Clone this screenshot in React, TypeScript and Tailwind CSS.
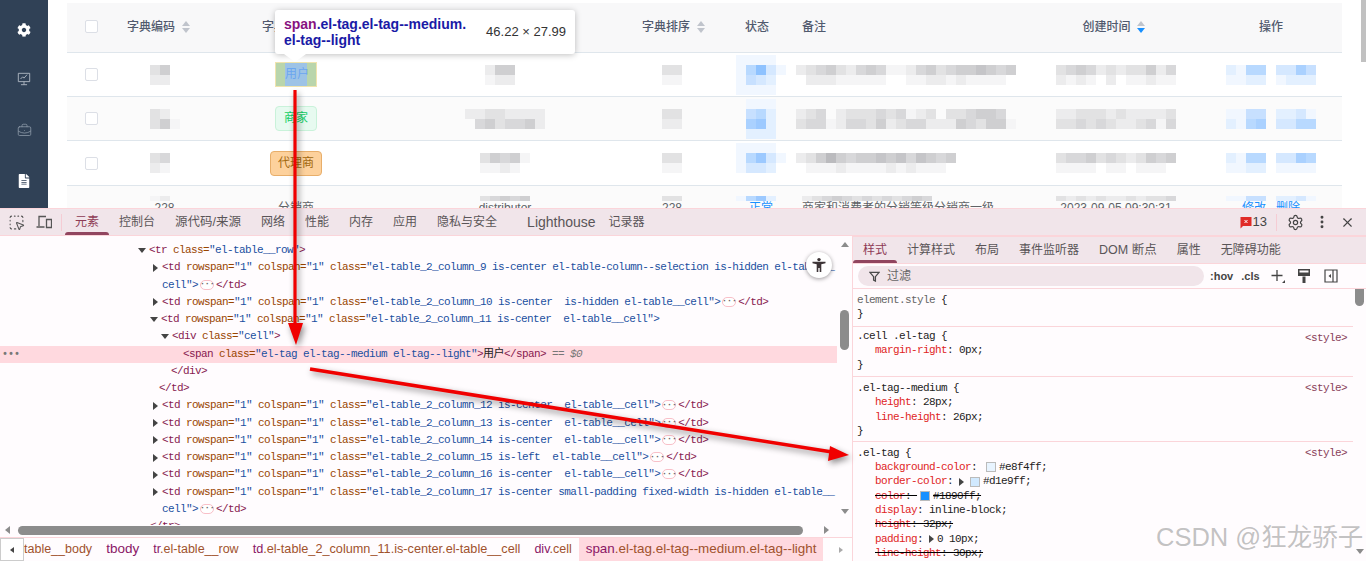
import { ReactNode } from 'react';
import { FaCog, FaFileAlt } from 'react-icons/fa';
import { BriefcaseBusiness, EllipsisVertical, Settings, SquareDashedMousePointer, X } from 'lucide-react';

const MONO = "font-['Liberation_Mono','Noto_Sans_CJK_SC',monospace] text-[11px] tracking-[-0.6px]";

// blurred patch of the original picture: each digit is one 10x10 block
function Mosaic({ rows, blue }: { rows: string[]; blue?: boolean }) {
  const base = blue ? [128, 186, 255] : [168, 168, 172];
  const tone = (d: string) => {
    const a = Number(d) / 9;
    return `rgb(${base.map((c) => Math.round(255 - (255 - c) * a)).join(',')})`;
  };
  return (
    <div className="flex flex-col shrink-0">
      {rows.map((r, i) => (
        <div key={i} className="flex h-[10px]">
          {r.split('').map((d, j) => (
            <div key={j} className="w-[10px] h-[10px]" style={{ backgroundColor: d === '0' ? 'transparent' : tone(d) }} />
          ))}
        </div>
      ))}
    </div>
  );
}

function SortCaret({ active }: { active?: boolean }) {
  return (
    <span className="flex flex-col gap-[2px] ml-[6px] w-[9px] items-center">
      <span className="w-0 h-0 border-x-[4px] border-x-transparent border-b-[5px] border-b-[#c0c4cc]" />
      <span className={`w-0 h-0 border-x-[4px] border-x-transparent border-t-[5px] ${active ? 'border-t-[#1890ff]' : 'border-t-[#c0c4cc]'}`} />
    </span>
  );
}

const COLS = 'grid grid-cols-[48px_99px_164px_254px_80px_84px_224px_180px_142px]';

function Check() {
  return (
    <div className="flex justify-center items-center">
      <span className="w-[13px] h-[13px] rounded-[2px] border border-[#dcdfe6] bg-white" />
    </div>
  );
}

function Row({ bg, h, cells }: { bg: string; h: string; cells: ReactNode[] }) {
  return (
    <div className={`${COLS} ${bg} ${h} border-b border-[#dfe6ec] items-center`}>
      <Check />
      {cells.map((c, i) => (
        <div key={i} className={i === 5 ? 'flex justify-start' : i === 4 ? 'flex justify-center pl-[14px]' : i === 6 ? 'flex justify-center pl-[12px]' : 'flex justify-center'}>
          {c}
        </div>
      ))}
    </div>
  );
}

function Ops({ a, b }: { a: string[]; b: string[] }) {
  return (
    <div className="flex gap-[10px]">
      <Mosaic blue rows={a} />
      <Mosaic blue rows={b} />
    </div>
  );
}

function Table() {
  return (
    <div className="w-[1275px] ml-[19px] mt-[3px] shrink-0">
      <div className={`${COLS} h-[50px] bg-[#f8f8f9] border-b border-[#dfe6ec] items-center text-[12px] leading-[16px] pb-[2px] font-medium text-[#515a6e]`}>
        <Check />
        <div className="flex items-center pl-[12px]">字典编码<SortCaret /></div>
        <div className="flex items-center pl-[48px]">字典名称<SortCaret /></div>
        <div />
        <div className="flex items-center pl-[10px] whitespace-nowrap">字典排序<SortCaret /></div>
        <div className="flex justify-center pl-[6px]">状态</div>
        <div className="pl-[6px]">备注</div>
        <div className="flex items-center justify-center pl-[8px]">创建时间<SortCaret active /></div>
        <div className="flex justify-center">操作</div>
      </div>
      <Row
        bg="bg-white"
        h="h-[44px]"
        cells={[
          <Mosaic rows={['350', '220']} />,
          <span className="w-[42px] h-[25px]" />,
          <Mosaic rows={['2550', '1220']} />,
          <Mosaic rows={['33', '11']} />,
          <Mosaic blue rows={['11110', '15831', '14320', '11110']} />,
          <Mosaic rows={['2345324541124534556545', '0222111110011221211110']} />,
          <Mosaic rows={['345423233524', '212102011211']} />,
          <Ops a={['2155', '1122']} b={['3364', '1222']} />,
        ]}
      />
      <Row
        bg="bg-[#fbfbfb]"
        h="h-[44px]"
        cells={[
          <Mosaic rows={['320', '351']} />,
          <span className="h-[25px] w-[42px] rounded-[4px] border border-[#c9f2da] bg-[#e7faf0] text-[#13ce66] text-[12px] leading-[23px] text-center">商家</span>,
          <Mosaic rows={['22332222', '04534452']} />,
          <Mosaic rows={['33', '22']} />,
          <Mosaic blue rows={['01110', '04520', '06720', '02220']} />,
          <Mosaic rows={['2340233343412303345540', '3441244352344222543551']} />,
          <Mosaic rows={['223332322223', '334343223414']} />,
          <Ops a={['1144', '2156']} b={['2231', '3355']} />,
        ]}
      />
      <Row
        bg="bg-white"
        h="h-[45px]"
        cells={[
          <Mosaic rows={['340', '210']} />,
          <span className="h-[25px] w-[52px] rounded-[4px] border border-[#e8ae6a] bg-[#fdd19c] text-[#a2680f] text-[12px] leading-[23px] text-center">代理商</span>,
          <Mosaic rows={['35451', '11210']} />,
          <Mosaic rows={['33', '11']} />,
          <Mosaic blue rows={['11110', '15731', '13320', '00000']} />,
          <Mosaic rows={['2357545565646545', '0111211112121110']} />,
          <Mosaic rows={['344534323545', '111101101110']} />,
          <Ops a={['2155', '1122']} b={['3365', '1111']} />,
        ]}
      />
      <div className={`${COLS} bg-[#fbfbfb] h-[44px] pt-[10px] text-[12px] leading-[14px] text-[#606266]`}>
        <span />
        <Cell4 patch={<Mosaic rows={['120']} />}>228</Cell4>
        <Cell4>分销商</Cell4>
        <Cell4 patch={<Mosaic rows={['34545']} />}>distributor</Cell4>
        <Cell4 patch={<Mosaic rows={['33']} />}>228</Cell4>
        <Cell4 cls="pl-[14px] text-[#1890ff]" patch={<Mosaic blue rows={['15720']} />}>正常</Cell4>
        <Cell4 cls="!items-start pl-[6px]" patch={<Mosaic rows={['2345434343454']} />}>商家和消费者的分销等级分销商一级</Cell4>
        <Cell4 cls="pl-[12px]" patch={<Mosaic rows={['323232232334']} />}>2023-09-05 09:30:31</Cell4>
        <Cell4 cls="text-[#1890ff]" patch={<Ops a={['1144']} b={['2231']} />}>修改&nbsp;&nbsp;&nbsp;删除</Cell4>
      </div>
    </div>
  );
}

function Cell4({ patch, cls = '', children }: { patch?: ReactNode; cls?: string; children: ReactNode }) {
  return (
    <div className={`flex flex-col items-center overflow-hidden ${cls}`}>
      <div className="h-[5px] overflow-hidden">{patch}</div>
      <span className="whitespace-nowrap">{children}</span>
    </div>
  );
}

function Tooltip() {
  return (
    <>
      <div className="absolute left-[275px] top-[10px] w-[300px] h-[44px] bg-white rounded-[3px] shadow-[0_1px_6px_rgba(0,0,0,0.25)] flex items-center pl-[9px] pr-[9px] justify-between">
        <div className="text-[14px] leading-[16px] font-bold text-[#1a1aa6] w-[194px] font-['Liberation_Sans',sans-serif]">
          <span className="text-[#881280]">span</span>.el-tag.el-tag--medium.<br />el-tag--light
        </div>
        <div className="text-[13px] text-[#333] whitespace-nowrap font-['Liberation_Sans',sans-serif]">46.22 × 27.99</div>
      </div>
      <div className="absolute left-[284px] top-[54px] w-0 h-0 border-x-[11px] border-x-transparent border-t-[8px] border-t-white" />
      <div className="absolute left-[275px] top-[62px] w-[42px] h-[25px] border border-[#f0e4ae] bg-[#b9d5ac] flex justify-center">
        <span className="w-[22px] h-full bg-[#9dc3e6] text-[#6ba6f0] text-[12px] leading-[23px] text-center whitespace-nowrap">用户</span>
      </div>
    </>
  );
}

function Sidebar() {
  return (
    <aside className="w-[48px] h-full bg-[#304156] flex flex-col items-center shrink-0 pt-[23px]">
      <FaCog className="text-white w-[14px] h-[14px]" />
      <svg viewBox="0 0 16 16" className="w-[14px] h-[14px] mt-[35px] text-[#b6bec8]" fill="none" stroke="currentColor" strokeWidth="1">
        <path d="M1.5 1.5h13v9.5h-13zM8 11v3.5M4.5 14.5h7M4 8l2.5-2.5L8 7l3.5-4" />
      </svg>
      <BriefcaseBusiness className="text-[#8a97a6] w-[15px] h-[15px] mt-[37px]" strokeWidth={1.3} />
      <FaFileAlt className="text-white w-[12px] h-[14px] mt-[36px]" />
    </aside>
  );
}

function Tab({ label, active }: { label: string; active?: boolean }) {
  return (
    <div className={`relative h-full flex items-center whitespace-nowrap ${active ? 'text-[#8e3b55]' : 'text-[#5a5558]'}`}>
      {label}
      {active && <span className="absolute -left-[10px] -right-[10px] bottom-0 h-[3px] rounded-t-[3px] bg-[#91455f]" />}
    </div>
  );
}

function Dots() {
  return (
    <span className="inline-flex items-center justify-center align-middle w-[14px] h-[10px] mx-[2px] rounded-full border border-[#f9bfc8] bg-white text-[#666] text-[9px] leading-none tracking-[-0.5px] font-black">
      ···
    </span>
  );
}

const T = ({ c }: { c: string }) => <span className="text-[#881a50]">{c}</span>;
const A = ({ c }: { c: string }) => <span className="text-[#994500]">{c}</span>;
const V = ({ c }: { c: string }) => <span className="text-[#1a4fa0]">{c}</span>;

function TdOpen({ cls }: { cls: string }) {
  return (
    <>
      <T c="<td " />
      <A c="rowspan=" />
      <V c={'"1"'} />
      <A c=" colspan=" />
      <V c={'"1"'} />
      <A c=" class=" />
      <V c={`"${cls}`} />
    </>
  );
}

const Closed = () => (
  <>
    <V c={'">'} />
    <Dots />
    <T c="</td>" />
  </>
);

function Line({ pl, caret, sel, children }: { pl: string; caret?: 'r' | 'd'; sel?: boolean; children: ReactNode }) {
  return (
    <div className={`relative h-[17.25px] leading-[17.25px] whitespace-pre flex items-center ${pl} ${sel ? 'bg-[#ffd9df]' : ''}`}>
      {sel && <span className="absolute left-[2px] text-[#777] text-[10px] tracking-normal font-bold">•••</span>}
      {caret === 'r' && <span className="-ml-[9px] mr-[4px] w-0 h-0 border-y-[4px] border-y-transparent border-l-[5px] border-l-[#444]" />}
      {caret === 'd' && <span className="-ml-[12px] mr-[3px] w-0 h-0 border-x-[4.5px] border-x-transparent border-t-[5px] border-t-[#444]" />}
      <span>{children}</span>
    </div>
  );
}

function CodePane() {
  return (
    <div className={`relative flex-1 overflow-hidden pt-[6px] bg-[#fffcfe] ${MONO}`}>
      <Line pl="pl-[150px]" caret="d"><T c="<tr " /><A c="class=" /><V c={'"el-table__row"'} /><T c=">" /></Line>
      <Line pl="pl-[162px]" caret="r"><TdOpen cls="el-table_2_column_9 is-center el-table-column--selection is-hidden el-table__" /></Line>
      <Line pl="pl-[162px]"><V c="cell" /><Closed /></Line>
      <Line pl="pl-[162px]" caret="r"><TdOpen cls="el-table_2_column_10 is-center  is-hidden el-table__cell" /><Closed /></Line>
      <Line pl="pl-[162px]" caret="d"><TdOpen cls="el-table_2_column_11 is-center  el-table__cell" /><V c={'">'} /></Line>
      <Line pl="pl-[173px]" caret="d"><T c="<div " /><A c="class=" /><V c={'"cell"'} /><T c=">" /></Line>
      <Line pl="pl-[183px]" sel>
        <T c="<span " /><A c="class=" /><V c={'"el-tag el-tag--medium el-tag--light"'} /><T c=">" />
        <span className="text-[#222]">用户</span><T c="</span>" />
        <span className="italic text-[#777]"> == $0</span>
      </Line>
      <Line pl="pl-[171px]"><T c="</div>" /></Line>
      <Line pl="pl-[159px]"><T c="</td>" /></Line>
      <Line pl="pl-[162px]" caret="r"><TdOpen cls="el-table_2_column_12 is-center  el-table__cell" /><Closed /></Line>
      <Line pl="pl-[162px]" caret="r"><TdOpen cls="el-table_2_column_13 is-center  el-table__cell" /><Closed /></Line>
      <Line pl="pl-[162px]" caret="r"><TdOpen cls="el-table_2_column_14 is-center  el-table__cell" /><Closed /></Line>
      <Line pl="pl-[162px]" caret="r"><TdOpen cls="el-table_2_column_15 is-left  el-table__cell" /><Closed /></Line>
      <Line pl="pl-[162px]" caret="r"><TdOpen cls="el-table_2_column_16 is-center  el-table__cell" /><Closed /></Line>
      <Line pl="pl-[162px]" caret="r"><TdOpen cls="el-table_2_column_17 is-center small-padding fixed-width is-hidden el-table__" /></Line>
      <Line pl="pl-[162px]"><V c="cell" /><Closed /></Line>
      <Line pl="pl-[150px]"><T c="</tr>" /></Line>
      <button className="absolute left-[806px] top-[16px] w-[26px] h-[26px] rounded-full bg-white shadow-[0_1px_4px_rgba(0,0,0,0.4)] flex items-center justify-center">
        <svg viewBox="0 0 16 16" className="w-[16px] h-[16px]" fill="#3c3436">
          <circle cx="8" cy="2.6" r="1.7" />
          <path d="M1.5 4.8h13v1.5l-4.2 1v7.7H8.7v-4H7.3v4H5.7V7.3l-4.2-1z" />
        </svg>
      </button>
    </div>
  );
}

function Rule({ children, src, pt, pb = 'pb-[4px]', last }: { children: ReactNode; src?: boolean; pt: string; pb?: string; last?: boolean }) {
  return (
    <div className={`relative ${pt} ${pb} pl-[4px] ${last ? '' : 'border-b border-[#fbd5da]'}`}>
      {src && <span className="absolute right-[6px] top-[4px] text-[#8a3f5a] leading-[14.4px]">&lt;style&gt;</span>}
      {children}
    </div>
  );
}

function Decl({ name, off, children }: { name: string; off?: boolean; children: ReactNode }) {
  return (
    <div className={`h-[14.4px] leading-[14.4px] pl-[18px] whitespace-nowrap flex items-center ${off ? 'line-through' : ''}`}>
      <span className="text-[#e0251f]">{name}</span>
      <span className="text-[#222]">:&nbsp;</span>
      <span className="text-[#222] flex items-center">{children}</span>
    </div>
  );
}

const Sel = ({ c }: { c: string }) => <div className="h-[14.4px] leading-[14.4px] text-[#222]">{c}</div>;
const Swatch = ({ bg }: { bg: string }) => <span className={`inline-block w-[10px] h-[10px] mx-[3px] border border-[#bbb] ${bg}`} />;
const Tri = () => <span className="w-0 h-0 mr-[3px] border-y-[4px] border-y-transparent border-l-[5px] border-l-[#444]" />;

function StylesPane() {
  return (
    <div className="flex-1 min-w-0 flex flex-col border-l border-[#fbd5da] bg-[#fffcfe]">
      <div className="h-[28px] bg-[#f1e5ea] border-y border-[#fbd5da] flex items-center gap-[20px] pl-[10px] text-[12px]">
        <Tab label="样式" active />
        <Tab label="计算样式" />
        <Tab label="布局" />
        <Tab label="事件监听器" />
        <div className="text-[12.5px] h-full"><Tab label="DOM 断点" /></div>
        <Tab label="属性" />
        <Tab label="无障碍功能" />
      </div>
      <div className="h-[25px] flex items-center border-b border-[#fbd5da] pl-[5px] text-[#444]">
        <div className="w-[346px] h-[20px] rounded-full bg-[#f1e5ea] flex items-center pl-[11px] gap-[7px] text-[12px] text-[#666]">
          <svg viewBox="0 0 12 12" className="w-[11px] h-[11px]" fill="none" stroke="#4a4a4a" strokeWidth="1.4">
            <path d="M1 1.5h10L7 6.2V11L5 10V6.2z" />
          </svg>
          过滤
        </div>
        <span className="ml-[6px] text-[11px] font-bold">:hov</span>
        <span className="ml-[8px] text-[11px] font-bold">.cls</span>
        <svg viewBox="0 0 16 16" className="ml-[10px] w-[16px] h-[16px]" fill="none" stroke="#444" strokeWidth="1.3">
          <path d="M7 2v11M1.5 7.5h11" />
          <path d="M15 12v3h-3z" fill="#444" stroke="none" />
        </svg>
        <svg viewBox="0 0 14 16" className="ml-[11px] w-[14px] h-[16px]" fill="#444">
          <path d="M1 1h12v7H1zM2.5 2.5v2h9v-2zM5.5 8.5h3V15h-3z" fillRule="evenodd" />
        </svg>
        <svg viewBox="0 0 14 14" className="ml-[13px] w-[14px] h-[14px]" fill="none" stroke="#444" strokeWidth="1.2">
          <path d="M1 1h12v12H1zM9 1v12" />
          <path d="M7 5v4L4.5 7z" fill="#444" stroke="none" />
        </svg>
      </div>
      <div className={`flex-1 min-h-0 overflow-hidden flex ${MONO}`}>
        <div className="flex-1 min-w-0">
          <Rule pt="pt-[4px]">
            <div className="h-[14.4px] leading-[14.4px] text-[#666]">element.style <span className="text-[#222]">{'{'}</span></div>
            <Sel c="}" />
          </Rule>
          <Rule pt="pt-[2px]" src>
            <Sel c=".cell .el-tag {" />
            <Decl name="margin-right">0px;</Decl>
            <Sel c="}" />
          </Rule>
          <Rule pt="pt-[4px]" pb="pb-[2px]" src>
            <Sel c=".el-tag--medium {" />
            <Decl name="height">28px;</Decl>
            <Decl name="line-height">26px;</Decl>
            <Sel c="}" />
          </Rule>
          <Rule pt="pt-[4px]" src last>
            <Sel c=".el-tag {" />
            <Decl name="background-color"><Swatch bg="bg-[#e8f4ff]" />#e8f4ff;</Decl>
            <Decl name="border-color"><Tri /><Swatch bg="bg-[#d1e9ff]" />#d1e9ff;</Decl>
            <Decl name="color" off><Swatch bg="bg-[#1890ff]" />#1890ff;</Decl>
            <Decl name="display">inline-block;</Decl>
            <Decl name="height" off>32px;</Decl>
            <Decl name="padding"><Tri />0 10px;</Decl>
            <Decl name="line-height" off>30px;</Decl>
          </Rule>
        </div>
        <div className="w-[13px] shrink-0 flex flex-col items-center text-[#888] relative">
          <span className="mt-[-15px] w-0 h-0 border-x-[4.5px] border-x-transparent border-b-[5px] border-b-[#8c8c8c]" />
          <span className="w-[9px] h-[21px] mt-[6px] rounded-full bg-[#8c8c8c]" />
          <span className="mt-auto mb-[7px] w-0 h-0 border-x-[4.5px] border-x-transparent border-t-[5px] border-t-[#8c8c8c]" />
        </div>
      </div>
    </div>
  );
}

function Arrows() {
  return (
    <svg className="absolute inset-0 pointer-events-none drop-shadow-[2px_3px_3px_rgba(0,0,0,0.45)]" width="1366" height="561" viewBox="0 0 1366 561">
      <path d="M295 90V326" stroke="#f00000" strokeWidth="3.2" fill="none" />
      <path d="M288 323 H303 L296 345z" fill="#f00000" />
      <path d="M310 369 L832 452" stroke="#f00000" strokeWidth="3.6" fill="none" />
      <path d="M830 446 L849 455 L828 461z" fill="#f00000" />
    </svg>
  );
}

export default function App() {
  return (
    <div className="relative w-[1366px] h-[561px] overflow-hidden bg-white flex flex-col font-['Liberation_Sans','Noto_Sans_CJK_SC',sans-serif]">
      {/* page under inspection */}
      <div className="h-[208px] flex overflow-hidden shrink-0">
        <Sidebar />
        <Table />
        <div className="flex-1 flex justify-end">
          <div className="w-[5px] h-[62px] bg-[#c1c1c1]" />
        </div>
      </div>

      {/* devtools */}
      <div className="flex-1 min-h-0 flex flex-col">
        <div className="h-[28px] shrink-0 bg-[#f1e5ea] border-y border-[#fbd5da] flex items-center text-[12px]">
          <SquareDashedMousePointer className="ml-[8px] w-[17px] h-[17px] text-[#555]" strokeWidth={1.5} />
          <svg viewBox="0 0 16 14" className="ml-[11px] w-[16px] h-[14px]" fill="none" stroke="#555" strokeWidth="1.3">
            <path d="M3 11V1.5h7M0.5 12h8M10.5 4.5h5v8h-5z" />
          </svg>
          <span className="ml-[9px] w-px h-[17px] bg-[#f5ccd4]" />
          <div className="ml-[13px] h-full flex items-center">
            <Tab label="元素" active />
            <div className="ml-[20px] h-full"><Tab label="控制台" /></div>
            <div className="ml-[20px] h-full text-[12.5px]"><Tab label="源代码/来源" /></div>
            <div className="ml-[20px] h-full"><Tab label="网络" /></div>
            <div className="ml-[20px] h-full"><Tab label="性能" /></div>
            <div className="ml-[20px] h-full"><Tab label="内存" /></div>
            <div className="ml-[20px] h-full"><Tab label="应用" /></div>
            <div className="ml-[20px] h-full"><Tab label="隐私与安全" /></div>
            <div className="ml-[30px] h-full text-[14px]"><Tab label="Lighthouse" /></div>
            <div className="ml-[13px] h-full"><Tab label="记录器" /></div>
          </div>
          <div className="ml-auto flex items-center text-[#555]">
            <svg viewBox="0 0 12 13" className="w-[12px] h-[13px]">
              <path d="M0.5 1h11v9H3L0.5 12.5z" fill="#e02b27" />
              <path d="M4.5 4l3 3M7.5 4l-3 3" stroke="#fff" strokeWidth="1" />
            </svg>
            <span className="ml-[1px] text-[13px] text-[#444]">13</span>
            <span className="ml-[9px] w-px h-[17px] bg-[#f5ccd4]" />
            <Settings className="ml-[10px] w-[17px] h-[17px] text-[#444]" strokeWidth={1.7} />
            <EllipsisVertical className="ml-[10px] w-[16px] h-[16px] text-[#444]" strokeWidth={2.4} />
            <X className="ml-[10px] mr-[11px] w-[15px] h-[15px] text-[#444]" strokeWidth={1.8} />
          </div>
        </div>

        <div className="flex-1 min-h-0 flex">
          <div className="w-[852px] shrink-0 flex flex-col bg-[#fffcfe]">
            <div className="h-[289px] flex shrink-0">
              <CodePane />
              <div className="w-[15px] shrink-0 flex flex-col items-center">
                <span className="mt-[6px] w-0 h-0 border-x-[4.5px] border-x-transparent border-b-[5px] border-b-[#8c8c8c]" />
                <span className="mt-[63px] w-[9px] h-[40px] rounded-full bg-[#8c8c8c]" />
                <span className="mt-[159px] w-0 h-0 border-x-[4.5px] border-x-transparent border-t-[5px] border-t-[#8c8c8c]" />
              </div>
            </div>
            <div className="h-[10px] shrink-0 flex items-center pl-[5px]">
              <span className="w-0 h-0 border-y-[4.5px] border-y-transparent border-r-[5px] border-r-[#8c8c8c]" />
              <span className="ml-[8px] w-[785px] h-[9px] rounded-full bg-[#8c8c8c]" />
              <span className="ml-[21px] w-0 h-0 border-y-[4.5px] border-y-transparent border-l-[5px] border-l-[#8c8c8c]" />
            </div>
            <div className="mt-[2px] flex-1 min-h-0 border-t border-[#fbd5da] flex items-stretch text-[12.5px] whitespace-nowrap">
              <div className="w-[24px] border border-[#ccc] bg-white flex items-center justify-center">
                <span className="w-0 h-0 border-y-[3px] border-y-transparent border-r-[4px] border-r-[#444]" />
              </div>
              <div className="flex items-center h-full text-[#a0522d] overflow-hidden">
                <span>table__body</span>
                <span className="ml-[14px] text-[13.5px] text-[#8a1766]">tbody</span>
                <span className="ml-[14px]"><span className="text-[#8a1766]">tr</span>.el-table__row</span>
                <span className="ml-[14px] text-[12.7px]"><span className="text-[#8a1766]">td</span>.el-table_2_column_11.is-center.el-table__cell</span>
                <span className="ml-[14px]"><span className="text-[#8a1766]">div</span>.cell</span>
                <span className="ml-[7px] h-full px-[7px] text-[13.4px] flex items-center bg-[#ffd9df]"><span className="text-[#8a1766]">span</span>.el-tag.el-tag--medium.el-tag--light</span>
              </div>
              <div className="ml-auto w-[22px] bg-white flex items-center justify-center">
                <span className="w-0 h-0 border-y-[3px] border-y-transparent border-l-[4px] border-l-[#aaa]" />
              </div>
            </div>
          </div>
          <StylesPane />
        </div>
      </div>

      <Tooltip />
      <Arrows />
      <div className="absolute left-[1156px] top-[521px] text-[25.5px] leading-[32px] text-[#8f8f8f]/55 whitespace-nowrap">CSDN @狂龙骄子</div>
    </div>
  );
}
